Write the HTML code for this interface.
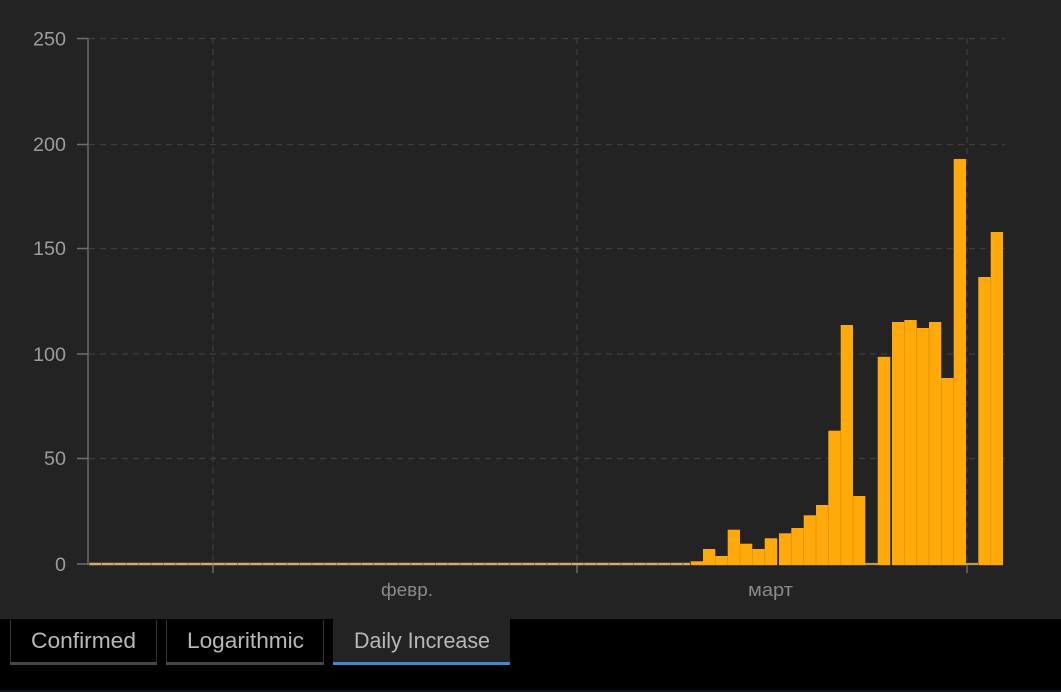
<!DOCTYPE html>
<html>
<head>
<meta charset="utf-8">
<style>
html,body{margin:0;padding:0;background:#000;width:1061px;height:692px;overflow:hidden}
svg{display:block;font-family:"Liberation Sans","DejaVu Sans",sans-serif}
</style>
</head>
<body>
<svg width="1061" height="692" viewBox="0 0 1061 692" xmlns="http://www.w3.org/2000/svg">
<rect width="1061" height="692" fill="#000"/>
<rect width="1061" height="619" fill="#232323"/>
<rect y="690" width="1061" height="2" fill="#10141a"/>

<!-- grid -->
<g stroke="#3e3e3e" stroke-width="1.2" stroke-dasharray="6 5" fill="none">
<path d="M89 38.5H1005M89 144.5H1005M89 248.5H1005M89 354H1005M89 458.5H1005"/>
<path d="M213 38V565M577 38V565M967 38V565"/>
</g>

<!-- axes -->
<g stroke="#6e6e6e" stroke-width="1.4" fill="none">
<path d="M88 38V565"/>
<path d="M77 38.5H88M77 144.5H88M77 248.5H88M77 354H88M77 458.5H88M77 564H88"/>
<path d="M213 565V573M577 565V573M967 565V573"/>
</g>

<!-- zero line -->
<path d="M89 564H690" stroke="#d0ac66" stroke-width="2.6"/>
<path d="M865 564H878M966 564H978" stroke="#b89a60" stroke-width="2.2"/>
<path d="M89 564H690" stroke="#8a744a" stroke-width="2.6" stroke-dasharray="1 11.37" stroke-dashoffset="-12"/>

<!-- bars -->
<g fill="#ffa90a">
<rect x="690.7" y="561.3" width="12.3" height="3.9"/>
<rect x="703" y="549" width="12.3" height="16.2"/>
<rect x="715.3" y="556" width="12.4" height="9.2"/>
<rect x="727.7" y="529.7" width="12.3" height="35.5"/>
<rect x="740" y="543.7" width="12.3" height="21.5"/>
<rect x="752.3" y="549" width="12.4" height="16.2"/>
<rect x="764.7" y="538.3" width="12.6" height="26.9"/>
<rect x="779" y="533.3" width="12.3" height="31.9"/>
<rect x="791.3" y="528" width="12.4" height="37.2"/>
<rect x="803.7" y="515.3" width="12.3" height="49.9"/>
<rect x="816" y="505" width="12.3" height="60.2"/>
<rect x="828.3" y="430.7" width="12.4" height="134.5"/>
<rect x="840.7" y="325" width="12.3" height="240.2"/>
<rect x="853" y="496" width="12.3" height="69.2"/>
<rect x="877.7" y="356.8" width="12.6" height="208.4"/>
<rect x="892" y="322" width="12.3" height="243.2"/>
<rect x="904.3" y="320" width="12.4" height="245.2"/>
<rect x="916.7" y="328" width="12.3" height="237.2"/>
<rect x="929" y="322" width="12.3" height="243.2"/>
<rect x="941.3" y="378" width="12.4" height="187.2"/>
<rect x="953.7" y="159" width="12.3" height="406.2"/>
<rect x="978.3" y="277" width="12.4" height="288.2"/>
<rect x="990.7" y="232" width="12.3" height="333.2"/>
</g>
<!-- bar separators -->
<path d="M715.3 556V565M727.7 556V565M740 544V565M752.3 549V565M764.7 549V565M791.3 533V565M803.7 528V565M816 515V565M828.3 505V565M840.7 431V565M853 496V565M904.3 322V565M916.7 328V565M929 328V565M941.3 378V565M953.7 378V565M990.7 277V565" stroke="#d8910c" stroke-width="0.7" fill="none"/>

<!-- labels -->
<g fill="#9c9c9c" font-size="19" text-anchor="end">
<text x="66" y="45.5" textLength="33" lengthAdjust="spacingAndGlyphs">250</text>
<text x="66" y="151" textLength="33" lengthAdjust="spacingAndGlyphs">200</text>
<text x="66" y="255" textLength="33" lengthAdjust="spacingAndGlyphs">150</text>
<text x="66" y="361" textLength="33" lengthAdjust="spacingAndGlyphs">100</text>
<text x="66" y="465" textLength="22" lengthAdjust="spacingAndGlyphs">50</text>
<text x="66" y="571" textLength="11" lengthAdjust="spacingAndGlyphs">0</text>
</g>
<g fill="#8a8a8a" font-size="18">
<text x="381" y="596" textLength="52" lengthAdjust="spacingAndGlyphs">февр.</text>
<text x="748" y="596" textLength="45" lengthAdjust="spacingAndGlyphs">март</text>
</g>

<!-- tabs -->
<rect x="333" y="619" width="177" height="44" fill="#232323"/>
<path d="M10.5 620V663H156.5V620M166.5 620V663H323.5V620" fill="none" stroke="#333" stroke-width="1"/>
<rect x="10" y="662" width="147" height="3" fill="#474747"/>
<rect x="166" y="662" width="158" height="3" fill="#474747"/>
<rect x="333" y="662" width="177" height="3" fill="#4187d8"/>
<g fill="#b8b8b8" font-size="22">
<text x="31" y="648" textLength="105" lengthAdjust="spacingAndGlyphs">Confirmed</text>
<text x="187" y="648" textLength="117" lengthAdjust="spacingAndGlyphs">Logarithmic</text>
<text x="354" y="648" textLength="136" lengthAdjust="spacingAndGlyphs">Daily Increase</text>
</g>
</svg>
</body>
</html>
